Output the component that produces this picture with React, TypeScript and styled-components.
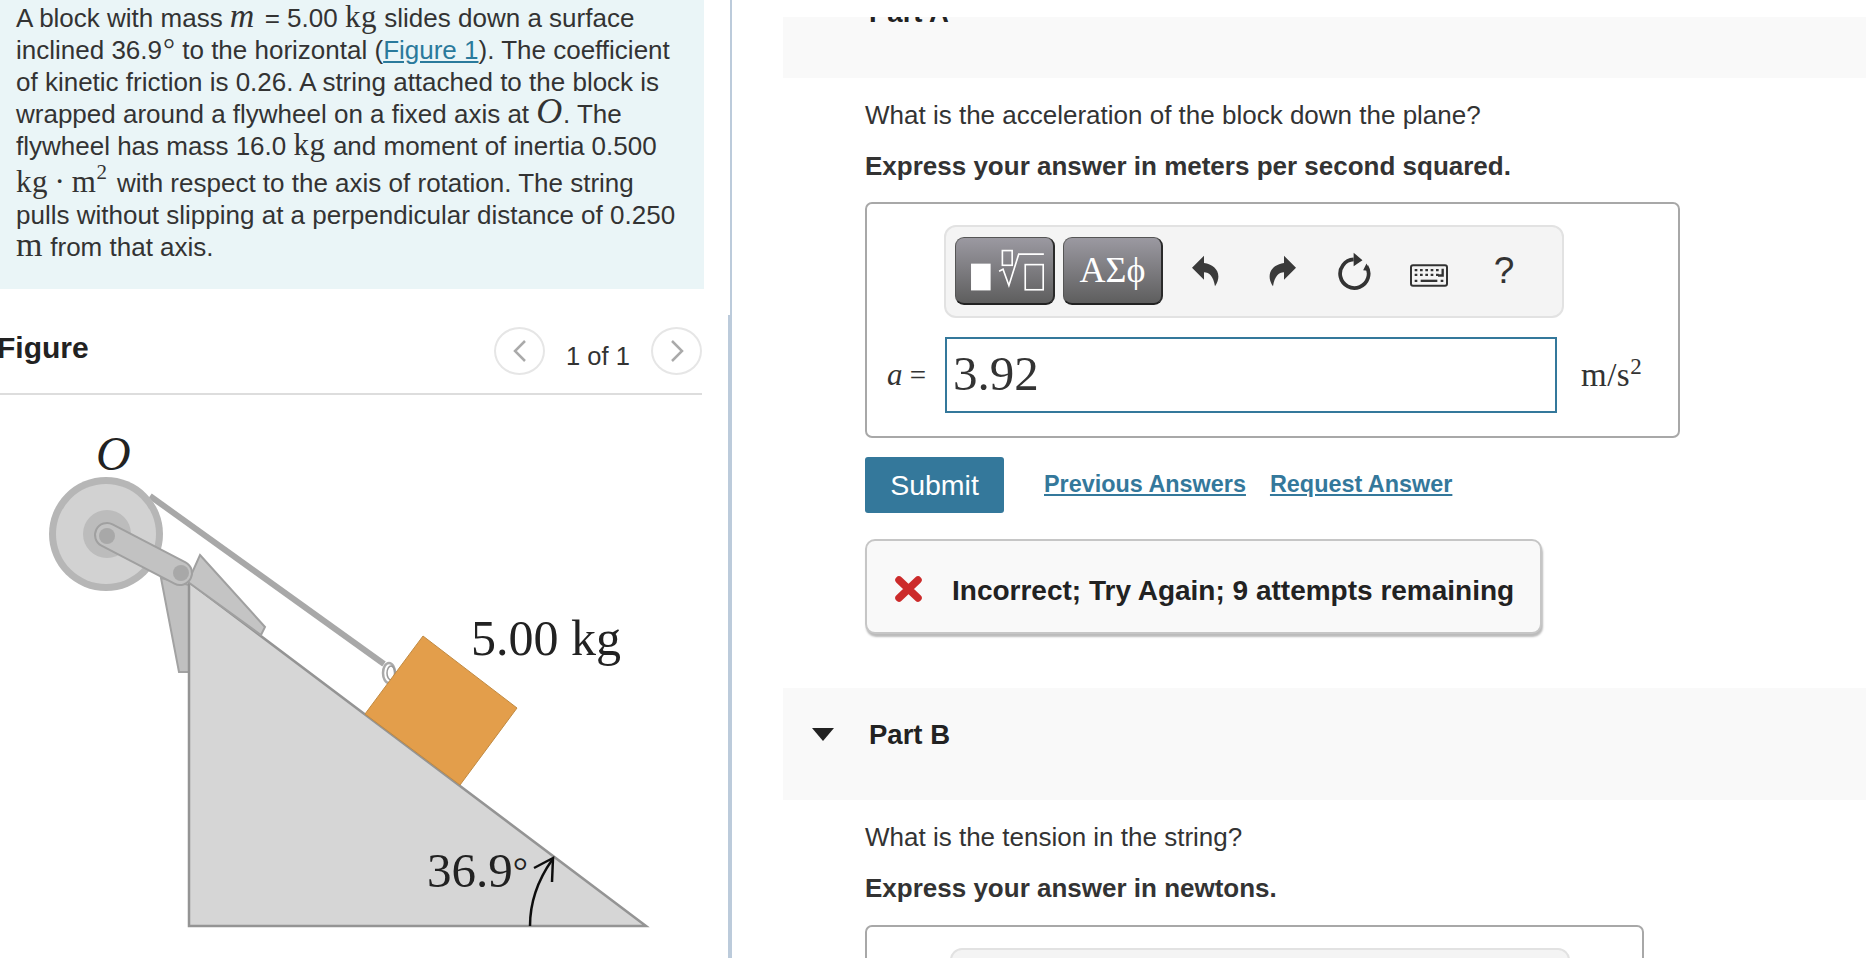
import React from "react";
import styled, { createGlobalStyle } from "styled-components";

const Global = createGlobalStyle`
  html, body { margin: 0; padding: 0; height: 958px; overflow: hidden; background: #fff; }
  #root { height: 958px; }
  * { box-sizing: border-box; }
`;
const Page = styled.div`
  display: flex; height: 958px; overflow: hidden; color: #333;
  font-family: "Liberation Sans", Arial, sans-serif; font-size: 26px;
`;
const LeftPane = styled.div`width: 730px; height: 958px; overflow: hidden; flex: none;`;
const Problem = styled.div`
  width: 704px; height: 289px; background: #eaf5f7; padding: 2px 0 0 16px; line-height: 32px; white-space: nowrap;
`;
const Degree = styled.span`
  font-family: "Liberation Serif", serif; font-size: 30px; line-height: 0; margin-left: 1px;
`;
const MathText = styled.span<{ $italic?: boolean; $size?: number; $track?: number }>`
  font-family: "Liberation Serif", serif; font-size: ${p => p.$size ?? 31}px; line-height: 0; letter-spacing: ${p => p.$track ?? 0.6}px; word-spacing: -2px;
  font-style: ${p => (p.$italic ? "italic" : "normal")};
  sup { font-size: 21px; margin-right: 2px; vertical-align: 13px; line-height: 20px; }
`;
const FigLink = styled.a`color: #2a7a9c; text-decoration: underline;`;
const FigureHead = styled.div`
  width: 702px; height: 106px; border-bottom: 2px solid #ddd; display: flex; align-items: center; padding: 8px 0 0 0;
`;
const FigureTitle = styled.h2`margin: 6px 0 0 -3px; font-size: 30px; font-weight: 700; color: #222; flex: 1;`;
const RoundBtn = styled.span`
  width: 51px; height: 48px; border: 2px solid #e6e6e6; border-radius: 50%; display: flex; align-items: center; justify-content: center; margin-top: 12px; color: #aaa;
`;
const Counter = styled.span`width: 106px; text-align: center; margin-top: 22px; font-size: 25.5px;`;
const FigureArt = styled.svg`display: block; width: 730px; height: 562px;`;
const Divider = styled.div`
  width: 2px; height: 958px; background: #bccbdb; flex: none; position: relative;
  &::after { content: ""; position: absolute; left: -2px; top: 315px; bottom: 0; width: 2px; background: #bccbdb; }
`;
const RightPane = styled.div`flex: 1; height: 958px; padding-top: 17px;`;
const Viewport = styled.div`height: 941px; overflow: hidden;`;
const Scroller = styled.div`margin-top: -51px; padding-left: 51px;`;
const PartBand = styled.div`
  height: 112px; background: #f9f9f9; display: flex; align-items: flex-start; padding: 30px 0 0 29px;
`;
const Caret = styled.span<{ $hidden?: boolean }>`
  width: 0; height: 0; border-left: 11px solid transparent; border-right: 11px solid transparent; border-top: 13px solid #222; margin-top: 10px;
  visibility: ${p => (p.$hidden ? "hidden" : "visible")};
`;
const PartTitle = styled.h3`margin: 0 0 0 35px; font-size: 27.5px; line-height: 34px; font-weight: 700; color: #222;`;
const PartBody = styled.div`padding: 24px 0 0 82px;`;
const Question = styled.p`margin: 0; line-height: 26px;`;
const Instruct = styled.p`margin: 25px 0 0; line-height: 26px; font-weight: 700;`;
const AnswerBox = styled.div<{ $width: number; $top: number }>`
  margin-top: ${p => p.$top}px; width: ${p => p.$width}px; border: 2px solid #a8a8a8; border-radius: 7px; padding: 21px 0 23px 0; background: #fff;
`;
const Toolbar = styled.div<{ $inset: number }>`
  margin-left: ${p => p.$inset}px; width: 620px; height: 93px; background: #f4f4f4; border: 2px solid #e2e2e2; border-radius: 12px; display: flex; align-items: center; padding: 0 0 2px 9px;
`;
const ToolBtn = styled.button`
  width: 100px; height: 68px; padding: 0; margin-right: 8px; border: 1px solid #555; border-right: 2px solid #2a2a2a; border-bottom: 2px solid #222; border-radius: 9px;
  background: linear-gradient(#9b99a1, #5e5e5e); display: flex; align-items: center; justify-content: center; color: #fff;
  font-family: "Liberation Serif", serif; font-size: 36px;
`;
const ToolSlot = styled.span<{ $drop?: number; $shift?: number }>`
  width: 74px; display: flex; justify-content: center; align-items: center; font-size: 37px; color: #333;
  padding-top: ${p => p.$drop ?? 0}px; padding-right: ${p => p.$shift ?? 0}px;
`;
const AnswerRow = styled.div`display: flex; align-items: center; margin-top: 19px; padding-left: 20px;`;
const VarLabel = styled.span`width: 58px; font-family: "Liberation Serif", serif; font-size: 29px; i { font-size: 31px; }`;
const ValueInput = styled.div`
  width: 612px; height: 76px; border: 2px solid #34789b; font-family: "Liberation Serif", serif; font-size: 49px; line-height: 70px; padding-left: 6px; color: #333;
`;
const Unit = styled.span`margin-left: 24px; font-family: "Liberation Serif", serif; font-size: 33px; letter-spacing: 0.5px; sup { font-size: 23px; line-height: 0; }`;
const Actions = styled.div`display: flex; align-items: center; margin-top: 19px;`;
const Submit = styled.button`
  width: 139px; height: 56px; background: #34789b; color: #fff; border: 0; border-radius: 3px; font: 28.5px "Liberation Sans", Arial, sans-serif; margin-right: 40px; padding: 0;
`;
const ActionLink = styled.a`color: #34789b; font-weight: 700; text-decoration: underline; font-size: 23.4px; margin: 0 24px 2px 0;`;
const Feedback = styled.div`
  margin-top: 26px; width: 677px; height: 95px; background: #f9f9f9; border: 2px solid #c6c6c6; border-radius: 10px; box-shadow: 1px 3px 2px #bbb; display: flex; align-items: center; padding: 4px 0 0 28px; font-weight: 700; font-size: 28px; color: #222;
`;
const FeedbackText = styled.span`margin: 4px 0 0 30px; white-space: nowrap;`;
const PartGap = styled.div`height: 54px;`;

const Undo = ({ flip }: { flip?: boolean }) => (
  <svg width="28" height="32" viewBox="66 44 84 96" style={flip ? { transform: "scaleX(-1)" } : undefined}>
    <path d="M66 82 L102 46 V68 C135 72 160 100 135 138 C130 108 118 96 102 96 V118 Z" fill="#3a3a3a" />
  </svg>
);
const Reload = () => (
  <svg width="34" height="38" viewBox="506 36 100 112">
    <path d="M552 58 A42 42 0 1 0 590 78" fill="none" stroke="#333" strokeWidth="11" />
    <path d="M552 38 L578 60 L552 78 Z M590 70 L600 92 L580 90 Z" fill="#333" />
  </svg>
);
const Keyboard = () => (
  <svg width="38" height="23" viewBox="0 0 114 68">
    <rect x="3" y="3" width="108" height="62" rx="6" fill="#f4f4f4" stroke="#333" strokeWidth="6" />
    <path d="M14 18h8M30 18h8M46 18h8M62 18h8M78 18h8M14 32h8M30 32h8M46 32h8M62 32h8M78 32h8M14 50h8M92 50h8" stroke="#333" strokeWidth="7" />
    <path d="M32 50h50" stroke="#333" strokeWidth="7" />
    <path d="M98 14v20h-14" stroke="#333" strokeWidth="7" fill="none" />
  </svg>
);
const RootGlyph = () => (
  <svg width="99" height="67" viewBox="16 15 297 202">
    <rect x="62" y="95" width="60" height="82" fill="#fff" />
    <rect x="158" y="55" width="30" height="45" fill="none" stroke="#fff" strokeWidth="5" />
    <path d="M148 118 L160 112 L178 162 L208 66 H285" fill="none" stroke="#fff" strokeWidth="5" />
    <rect x="228" y="98" width="55" height="77" fill="none" stroke="#fff" strokeWidth="5" />
  </svg>
);
const MathToolbar = ({ inset }: { inset: number }) => (
  <Toolbar $inset={inset}>
    <ToolBtn><RootGlyph /></ToolBtn>
    <ToolBtn>ΑΣϕ</ToolBtn>
    <ToolSlot $shift={4}><Undo /></ToolSlot>
    <ToolSlot><Undo flip /></ToolSlot>
    <ToolSlot $shift={2}><Reload /></ToolSlot>
    <ToolSlot $drop={9} $shift={2}><Keyboard /></ToolSlot>
    <ToolSlot>?</ToolSlot>
  </Toolbar>
);

const Drawing = () => (
  <FigureArt viewBox="0 395 730 562">
    <defs>
      <filter id="soft"><feGaussianBlur stdDeviation="0.7" /></filter>
    </defs>
    <g filter="url(#soft)">
      <polygon points="161,578 189,585 189,672 179,672" fill="#c0c0c0" stroke="#a2a2a2" strokeWidth="2" />
      <polygon points="189,582 646,926 189,926" fill="#d6d6d6" stroke="#949494" strokeWidth="2.5" />
      <polygon points="200,555 265,627 261,635 188,582" fill="#c4c4c4" stroke="#a0a0a0" strokeWidth="2" />
      <line x1="150" y1="496" x2="384" y2="664" stroke="#a8a8a8" strokeWidth="6" />
      <ellipse cx="389" cy="673" rx="6" ry="10" fill="none" stroke="#aaa" strokeWidth="2.5" />
      <ellipse cx="391" cy="673" rx="4" ry="7" fill="none" stroke="#999" strokeWidth="1.5" />
      <polygon points="423,636 517,708 460,785 365,714" fill="#e39e4b" stroke="#c08a42" strokeWidth="1" />
      <circle cx="106" cy="534" r="57" fill="#b6b6b6" />
      <circle cx="106" cy="534" r="50" fill="#d2d2d2" />
      <circle cx="107" cy="534" r="24" fill="#bcbcbc" />
      <line x1="107" y1="535" x2="180" y2="573" stroke="#a0a0a0" strokeWidth="26" strokeLinecap="round" />
      <line x1="107" y1="535" x2="180" y2="573" stroke="#c2c2c2" strokeWidth="22" strokeLinecap="round" />
      <circle cx="107" cy="536" r="8" fill="#a8a8a8" />
      <circle cx="181" cy="573" r="8" fill="#a8a8a8" />
      <path d="M530 926 C530 900 538 880 552 860" fill="none" stroke="#111" strokeWidth="2.5" />
      <path d="M534 868 L553 858 L552 882" fill="none" stroke="#111" strokeWidth="2.5" />
    </g>
    <text x="96" y="470" fontFamily="Liberation Serif, serif" fontStyle="italic" fontSize="48" fill="#222">O</text>
    <text x="471" y="655" fontFamily="Liberation Serif, serif" fontSize="50" fill="#222">5.00 kg</text>
    <text x="427" y="887" fontFamily="Liberation Serif, serif" fontSize="49" fill="#222">36.9<tspan fontSize="38" dy="-3">°</tspan></text>
  </FigureArt>
);

export default function App() {
  return (
    <Page>
      <Global />
      <LeftPane>
        <Problem>
          A block with mass <MathText $italic $size={34} $track={3}>m</MathText> = 5.00 <MathText>kg</MathText> slides down a surface<br />
          inclined 36.9<Degree>°</Degree> to the horizontal (<FigLink>Figure 1</FigLink>). The coefficient<br />
          of kinetic friction is 0.26. A string attached to the block is<br />
          wrapped around a flywheel on a fixed axis at <MathText $italic $size={36}>O</MathText>. The<br />
          flywheel has mass 16.0 <MathText>kg</MathText> and moment of inertia 0.500<br />
          <MathText>kg · m<sup>2</sup></MathText> with respect to the axis of rotation. The string<br />
          pulls without slipping at a perpendicular distance of 0.250<br />
          <MathText $size={34}>m</MathText> from that axis.
        </Problem>
        <FigureHead>
          <FigureTitle>Figure</FigureTitle>
          <RoundBtn>
            <svg width="16" height="26" viewBox="0 0 16 26"><path d="M13 3 L3 13 L13 23" fill="none" stroke="#aaa" strokeWidth="2.5" /></svg>
          </RoundBtn>
          <Counter>1 of 1</Counter>
          <RoundBtn>
            <svg width="16" height="26" viewBox="0 0 16 26"><path d="M3 3 L13 13 L3 23" fill="none" stroke="#aaa" strokeWidth="2.5" /></svg>
          </RoundBtn>
        </FigureHead>
        <Drawing />
      </LeftPane>
      <Divider />
      <RightPane>
        <Viewport>
          <Scroller>
            <PartBand>
              <Caret $hidden />
              <PartTitle>Part A</PartTitle>
            </PartBand>
            <PartBody>
              <Question>What is the acceleration of the block down the plane?</Question>
              <Instruct>Express your answer in meters per second squared.</Instruct>
              <AnswerBox $width={815} $top={23}>
                <MathToolbar inset={77} />
                <AnswerRow>
                  <VarLabel><i>a</i> =</VarLabel>
                  <ValueInput>3.92</ValueInput>
                  <Unit>m/s<sup>2</sup></Unit>
                </AnswerRow>
              </AnswerBox>
              <Actions>
                <Submit>Submit</Submit>
                <ActionLink>Previous Answers</ActionLink>
                <ActionLink>Request Answer</ActionLink>
              </Actions>
              <Feedback>
                <svg width="27" height="26" viewBox="0 0 27 26"><path d="M4 4 L23 22 M23 4 L4 22" stroke="#cc2b2b" strokeWidth="7.5" strokeLinecap="round" /></svg>
                <FeedbackText>Incorrect; Try Again; 9 attempts remaining</FeedbackText>
              </Feedback>
            </PartBody>
            <PartGap />
            <PartBand>
              <Caret />
              <PartTitle>Part B</PartTitle>
            </PartBand>
            <PartBody>
              <Question>What is the tension in the string?</Question>
              <Instruct>Express your answer in newtons.</Instruct>
              <AnswerBox $width={779} $top={24}>
                <MathToolbar inset={83} />
              </AnswerBox>
            </PartBody>
          </Scroller>
        </Viewport>
      </RightPane>
    </Page>
  );
}
